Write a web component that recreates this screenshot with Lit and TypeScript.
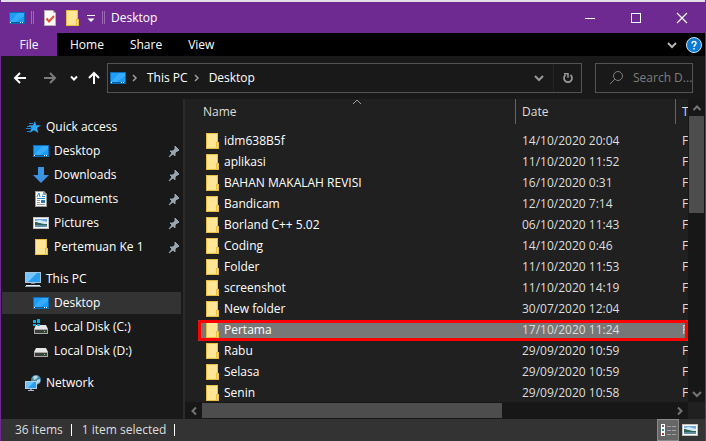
import { LitElement, html, css, svg, nothing } from "lit";
import { customElement, property, state } from "lit/decorators.js";
import { classMap } from "lit/directives/class-map.js";

const desktop = svg`
  <rect x="0" y="2" width="16" height="12" fill="#0a6fb8"/>
  <rect x="1" y="3" width="14" height="9" fill="#1e9cf7"/>
  <path d="M9 3h6v3L7 12H1z" fill="#36acff"/>
  <rect x="1" y="12" width="14" height="1" fill="#0b5c9c"/>
  <path d="M1 12h1v1H1zM11 12h1v1h-1zM13 12h1v1h-1z" fill="#fff"/>`;
const folder = svg`
  <rect x="2" y="0" width="12" height="16" fill="#e8bf45"/>
  <path d="M3 1h10v8h-1v6H3z" fill="#ffe596"/>
  <path d="M12 9h3v7h-3z" fill="#e8bf45"/><path d="M13 10h1v5h-1z" fill="#ffe07f"/>`;
const picture = svg`
  <rect x="0" y="2" width="16" height="12" fill="#c3c3c3"/>
  <rect x="1" y="3" width="14" height="10" fill="#fff"/>
  <rect x="2" y="4" width="12" height="8" fill="#6fa9ea"/>
  <path d="M2 6l5-1 7 2v2H2z" fill="#d6ebfa"/>
  <path d="M2 7c3 0 5 2 12 2v1H2z" fill="#2c6257"/>
  <path d="M2 10h12v2H2z" fill="#5d8fa5"/>`;
const disk = svg`
  <path d="M3 5h10l2 4H1z" fill="#e6e6e6"/>
  <rect x="1" y="9" width="14" height="5" fill="#a8a8a8"/>
  <rect x="2" y="10" width="12" height="3" fill="#3c3c3c"/>
  <rect x="11" y="11" width="1" height="1" fill="#4dff5a"/>`;

const icons: Record<string, unknown> = {
  desktop,
  folder,
  picture,
  disk,
  star: svg`
    <path d="M10 2l1.200 4.200H16l-4 2.800L13.300 14 9 11.200 4.400 14l2.200-5L3.500 6.200h4.500z" fill="#2ba6f5"/>
    <path d="M4 4.500h4M2 7.500h4M1 9.500h5M2 12.500h4" stroke="#1c86d4" stroke-width="1"/>`,
  download: svg`<path d="M5 0h6v8h5l-8 8-8-8h5z" fill="#3a94e3"/>`,
  document: svg`
    <path d="M2 0h9l3 3v13H2z" fill="#9b9b9b"/><path d="M3 1h7v3h3v11H3z" fill="#fff"/>
    <path d="M4 6l2-4 1 4M9 4h1M4 7.500h8M9 5.500h3" stroke="#2688d8" fill="none"/>
    <path d="M4 9.500h3M4 11.500h3M4 13.500h8" stroke="#9a9a9a"/><path d="M8 9h4v3H8z" fill="#3279a8"/>`,
  computer: svg`
    <rect x="0" y="1" width="16" height="11" fill="#a9c5d6"/><rect x="1" y="2" width="14" height="9" fill="#2a9ff0"/>
    <path d="M1 2h11L3 11H1z" fill="#73c6ff"/>
    <path d="M6 12h4v1H6z" fill="#6f8794"/><path d="M1 14h14v1H1z" fill="#e2eaf0"/><path d="M0 15h16v1H0z" fill="#93a6b1"/>`,
  windisk: svg`
    <g transform="translate(0 1)">${disk}</g>
    <path d="M0 1h3v3H0zM4 0h3v4H4zM0 5h3v2H0zM4 5h3v2H4z" fill="#00b4f0"/>`,
  network: svg`
    <circle cx="11" cy="5" r="5" fill="#4a8ba8"/>
    <path d="M8 2c2-2 4-1 5 0l-2 2-2 1zM12 5l3-1v3l-3 2z" fill="#b9dcea"/>
    <rect x="0" y="6" width="12" height="8" fill="#b5cfdf"/><rect x="1" y="7" width="10" height="6" fill="#2a9ff0"/>
    <path d="M1 7h8l-6 6H1z" fill="#6cc2ff"/><path d="M3 15h6v1H3z" fill="#a7bac5"/><path d="M5 14h2v1H5z" fill="#7d919c"/>`,
  check: svg`
    <path d="M2 0h9l3 3v13H2z" fill="#b9b3ad"/><path d="M3 1h8v2h2v12H3z" fill="#fbfbfb"/>
    <path d="M4.500 8.500l2.500 3 5-5.500" stroke="#e2532d" stroke-width="2" fill="none"/>`,
  customize: svg`<path d="M4 5h8v1H4z" fill="#fff"/><path d="M4.500 8.500h7L8 12z" fill="#fff"/>`,
  pin: svg`<path d="M10 3l4 4-1 1H12l-2 2v3l-2-2-4 3 3-4-2-2h3l2-2V4z" fill="#98a3ab" stroke="#98a3ab"/>`,
  back: svg`<path d="M14 8H3M8 3L3 8l5 5" stroke="#fff" stroke-width="2" fill="none"/>`,
  forward: svg`<path d="M2 8h11M8 3l5 5-5 5" stroke="#7b7b7b" stroke-width="2" fill="none"/>`,
  up: svg`<path d="M8 14V3M3 8l5-5 5 5" stroke="#fff" stroke-width="2" fill="none"/>`,
  recent: svg`<path d="M5 6.500l3 3 3-3" stroke="#fff" stroke-width="2" fill="none"/>`,
  down: svg`<path d="M4 6l4 4 4-4" stroke="currentColor" stroke-width="2" fill="none"/>`,
  right: svg`<path d="M7 5l3 3-3 3" stroke="currentColor" stroke-width="1.500" fill="none"/>`,
  left: svg`<path d="M10 4.500L6.500 8l3.500 3.500" stroke="currentColor" stroke-width="2" fill="none"/>`,
  next: svg`<path d="M6 4.500L9.500 8 6 11.500" stroke="currentColor" stroke-width="2" fill="none"/>`,
  above: svg`<path d="M4.500 10L8 6.500l3.500 3.500" stroke="currentColor" stroke-width="2" fill="none"/>`,
  sort: svg`<path d="M4 10l4-4 4 4" stroke="#a0a0a0" fill="none"/>`,
  refresh: svg`
    <path d="M10.500 5A4 4 0 1 1 5.500 5" stroke="#9a9a9a" stroke-width="1.700" fill="none"/>
    <path d="M4 3.700h4v4" stroke="#9a9a9a" stroke-width="1.500" fill="none"/>`,
  search: svg`<circle cx="10" cy="6" r="4.500" stroke="#7d7d7d" fill="none"/><path d="M7 9l-5 5" stroke="#7d7d7d"/>`,
  help: svg`
    <circle cx="8" cy="8" r="7.500" fill="#0b7bd8" stroke="#cfe4f5"/>
    <path d="M6 6.500C6 3.500 10.500 4 10 6.500 9.800 7.800 8 8 8 9.700M8 11v1.500" stroke="#fff" stroke-width="1.500" fill="none"/>`,
  minimize: svg`<path d="M3 8.500h10" stroke="#fff"/>`,
  maximize: svg`<rect x="3.500" y="3.500" width="9" height="9" stroke="#fff" fill="none"/>`,
  close: svg`<path d="M3 3l10 10M13 3L3 13" stroke="#fff" stroke-width="1.200"/>`,
  details: svg`
    <path d="M1 2h4v12H1z" fill="#fff"/>
    <path d="M2 3h2v2H2z" fill="#666"/><path d="M2 7h2v2H2z" fill="#2d8fd0"/><path d="M2 11h2v2H2z" fill="#b33"/>
    <path d="M7 4.500h4M12 4.500h4M7 8.500h4M12 8.500h4M7 12.500h4M12 12.500h4" stroke="#a2a2a2"/>`,
};

const icon = (name: string) => html`
  <svg viewBox="0 0 16 16" width="16" height="16" aria-hidden="true">${icons[name]}</svg>`;

const iconStyles = css`
  * { box-sizing: border-box; }
  svg { display: block; flex: none; }
  button {
    display: flex; align-items: center; justify-content: center;
    margin: 0; padding: 0; border: 0; background: none; color: inherit; font: inherit;
  }
`;

interface Place { icon: string; label: string; pinned?: boolean; nested?: boolean; current?: boolean }

const places: Place[][] = [
  [
    { icon: "star", label: "Quick access" },
    { icon: "desktop", label: "Desktop", nested: true, pinned: true },
    { icon: "download", label: "Downloads", nested: true, pinned: true },
    { icon: "document", label: "Documents", nested: true, pinned: true },
    { icon: "picture", label: "Pictures", nested: true, pinned: true },
    { icon: "folder", label: "Pertemuan Ke 1", nested: true, pinned: true },
  ],
  [
    { icon: "computer", label: "This PC" },
    { icon: "desktop", label: "Desktop", nested: true, current: true },
    { icon: "windisk", label: "Local Disk (C:)", nested: true },
    { icon: "disk", label: "Local Disk (D:)", nested: true },
  ],
  [{ icon: "network", label: "Network" }],
];

const files: [string, string][] = [
  ["idm638B5f", "14/10/2020 20:04"],
  ["aplikasi", "11/10/2020 11:52"],
  ["BAHAN MAKALAH REVISI", "16/10/2020 0:31"],
  ["Bandicam", "12/10/2020 7:14"],
  ["Borland C++ 5.02", "06/10/2020 11:43"],
  ["Coding", "14/10/2020 0:46"],
  ["Folder", "11/10/2020 11:53"],
  ["screenshot", "11/10/2020 14:19"],
  ["New folder", "30/07/2020 12:04"],
  ["Pertama", "17/10/2020 11:24"],
  ["Rabu", "29/09/2020 10:59"],
  ["Selasa", "29/09/2020 10:59"],
  ["Senin", "29/09/2020 10:58"],
];

@customElement("explorer-sidebar")
export class ExplorerSidebar extends LitElement {
  static styles = [iconStyles, css`
    :host { display: block; padding-top: 16px; background: #191919; overflow: hidden; }
    .group { list-style: none; margin: 0 0 8px; padding: 0; }
    .item { padding: 1px 2px 1px 1px; }
    .link {
      display: flex; align-items: center; gap: 5px; height: 22px;
      padding-left: 23px; color: #fff; text-decoration: none; white-space: nowrap;
    }
    .nested { padding-left: 31px; }
    .current { background: #333; }
    .label { flex: 1; }
  `];

  render() {
    return html`<nav aria-label="Places">${places.map((group) => html`
      <ul class="group">${group.map((p) => html`
        <li class="item"><a href="#" class=${classMap({ link: true, nested: !!p.nested, current: !!p.current })}>
          ${icon(p.icon)}<span class="label">${p.label}</span>${p.pinned ? icon("pin") : nothing}
        </a></li>`)}
      </ul>`)}</nav>`;
  }
}

@customElement("scroll-track")
export class ScrollTrack extends LitElement {
  @property({ type: Boolean, reflect: true }) horizontal = false;
  @property({ type: Number }) portion = 50;

  static styles = [iconStyles, css`
    :host { display: flex; flex-direction: column; background: #171717; color: #757575; padding: 0 1px; }
    :host([horizontal]) { flex-direction: row; padding: 1px 0; }
    .arrow { flex: none; width: 15px; height: 17px; }
    :host([horizontal]) .arrow { width: 17px; height: 15px; }
    .rail { flex: 1; min-width: 0; min-height: 0; }
    .thumb { background: #4d4d4d; width: 100%; height: 100%; }
  `];

  render() {
    const size = this.horizontal ? `width:${this.portion}%` : `height:${this.portion}%`;
    return html`
      <button class="arrow" aria-label="Scroll back">${icon(this.horizontal ? "left" : "above")}</button>
      <div class="rail"><div class="thumb" style=${size}></div></div>
      <button class="arrow" aria-label="Scroll forward">${icon(this.horizontal ? "next" : "down")}</button>`;
  }
}

@customElement("file-list")
export class FileList extends LitElement {
  @state() private selected = "Pertama";

  static styles = [iconStyles, css`
    :host {
      display: grid; grid-template: minmax(0, 1fr) 17px / minmax(0, 1fr) 17px;
      min-width: 0; min-height: 0; background: #202020; border-left: 2px solid #2b2b2b;
    }
    .view { overflow: hidden; padding-left: 13px; }
    .files { width: 100%; table-layout: fixed; border-collapse: separate; border-spacing: 0; }
    .date { width: 160px; }
    .type { width: 12px; }
    th {
      position: relative; height: 25px; padding: 0 0 0 6px; text-align: left; font-weight: 400;
      color: #dedede; white-space: nowrap; overflow: hidden;
    }
    th:first-child { padding-left: 5px; }
    th:not(:last-child) { border-right: 1px solid #636363; }
    .sort { position: absolute; top: -5px; left: 0; right: 0; display: flex; justify-content: center; }
    .gap td { height: 7px; padding: 0; }
    td { height: 21px; padding: 0 0 2px 6px; color: #dedede; white-space: nowrap; overflow: hidden; }
    .name { display: flex; align-items: center; gap: 4px; color: #fff; }
    .selected { background: #777; outline: 3px solid #f00; outline-offset: -3px; border-radius: 2px; }
  `];

  render() {
    return html`
      <div class="view">
        <table class="files">
          <colgroup><col><col class="date"><col class="type"></colgroup>
          <thead><tr>
            <th aria-sort="ascending">Name<span class="sort">${icon("sort")}</span></th>
            <th>Date</th><th>Type</th>
          </tr></thead>
          <tbody>
            <tr class="gap" aria-hidden="true"><td colspan="3"></td></tr>
            ${files.map(([name, date]) => html`
              <tr class=${classMap({ selected: name === this.selected })} @click=${() => (this.selected = name)}>
                <td><div class="name">${icon("folder")}${name}</div></td><td>${date}</td><td>File folder</td>
              </tr>`)}
          </tbody>
        </table>
      </div>
      <scroll-track .portion=${36}></scroll-track>
      <scroll-track horizontal .portion=${64}></scroll-track>`;
  }
}

@customElement("app-root")
export class AppRoot extends LitElement {
  static styles = [iconStyles, css`
    :host {
      display: flex; flex-direction: column; height: 100vh; overflow: hidden;
      border: solid #6f2a91; border-width: 0 1px; background: #191919; color: #fff;
      font: 12px/16px "Open Sans", "Noto Sans", sans-serif;
    }
    .title {
      display: flex; align-items: center; height: 33px; flex: none; padding-left: 8px;
      border-top: 2px solid #e2dfe6; background: #6f2a91;
    }
    .bar { width: 3px; height: 13px; border: solid #9b6ab5; border-width: 0 1px; }
    .quick { display: flex; align-items: center; gap: 6px; flex: 1; }
    .tools { display: flex; gap: 6px; padding-left: 2px; }
    .customize { width: 10px; }
    .window { width: 46px; height: 31px; }
    .tabs { display: flex; align-items: center; height: 23px; flex: none; background: #000; padding-right: 3px; }
    .tab { height: 23px; padding: 0 13px; color: #fff; }
    .file { width: 56px; background: #6f2a91; }
    .fold { margin-left: auto; margin-right: 6px; color: #b4b4b4; }
    .nav { display: flex; align-items: center; height: 43px; flex: none; padding: 0 12px 0 11px; }
    .arrows { display: flex; width: 95px; gap: 4px; }
    .forward { margin: 0 4px 0 10px; }
    .address, .search { display: flex; align-items: center; height: 30px; border: 1px solid #535353; color: #9a9a9a; }
    .address { flex: 1; padding-left: 2px; }
    .crumb { padding-left: 5px; color: #fff; text-decoration: none; }
    .drop { margin-left: auto; width: 28px; height: 28px; }
    .reload { width: 28px; height: 28px; border-left: 1px solid #242424; }
    .search { width: 98px; margin-left: 13px; padding-left: 12px; gap: 9px; }
    .query { flex: 1; min-width: 0; padding: 0; border: 0; outline: 0; background: none; color: #fff; font: inherit; }
    .query::placeholder { color: #7d7d7d; opacity: 1; }
    .body { display: grid; grid-template-columns: 182px minmax(0, 1fr); flex: 1; min-height: 0; }
    .status { display: flex; align-items: center; height: 22px; flex: none; background: #333; color: #dedede; padding: 0 4px 0 14px; }
    .count { border-right: 1px solid #fff; line-height: 12px; padding-right: 8px; margin-right: 10px; }
    .mode { width: 22px; height: 22px; }
    .modes { display: flex; margin-left: auto; }
    .on { background: #666; border: 1px solid #8a8a8a; }
  `];

  render() {
    return html`
      <header class="title">
        <div class="quick">
          ${icon("desktop")}<span class="bar"></span>
          <div class="tools">
            <button aria-label="Properties">${icon("check")}</button>
            <button aria-label="New folder">${icon("folder")}</button>
            <button class="customize" aria-label="Customize toolbar">${icon("customize")}</button>
          </div>
          <span class="bar"></span><span>Desktop</span>
        </div>
        <button class="window" aria-label="Minimize">${icon("minimize")}</button>
        <button class="window" aria-label="Maximize">${icon("maximize")}</button>
        <button class="window" aria-label="Close">${icon("close")}</button>
      </header>
      <div class="tabs">
        <button class="tab file">File</button><button class="tab">Home</button>
        <button class="tab">Share</button><button class="tab">View</button>
        <button class="fold" aria-label="Expand ribbon">${icon("down")}</button>
        <button aria-label="Help">${icon("help")}</button>
      </div>
      <div class="nav">
        <div class="arrows">
          <button aria-label="Back">${icon("back")}</button>
          <button class="forward" aria-label="Forward">${icon("forward")}</button>
          <button aria-label="Recent locations">${icon("recent")}</button>
          <button aria-label="Up">${icon("up")}</button>
        </div>
        <div class="address">
          ${icon("desktop")}${icon("right")}<a class="crumb" href="#">This PC</a>
          ${icon("right")}<a class="crumb" href="#">Desktop</a>
          <button class="drop" aria-label="Previous locations">${icon("down")}</button>
          <button class="reload" aria-label="Refresh">${icon("refresh")}</button>
        </div>
        <div class="search">${icon("search")}<input class="query" type="text" aria-label="Search Desktop" placeholder="Search D..."></div>
      </div>
      <main class="body"><explorer-sidebar></explorer-sidebar><file-list></file-list></main>
      <footer class="status">
        <span class="count">36 items</span><span class="count">1 item selected</span>
        <div class="modes">
          <button class="mode on" aria-label="Details view">${icon("details")}</button>
          <button class="mode" aria-label="Large icons view">${icon("picture")}</button>
        </div>
      </footer>`;
  }
}
